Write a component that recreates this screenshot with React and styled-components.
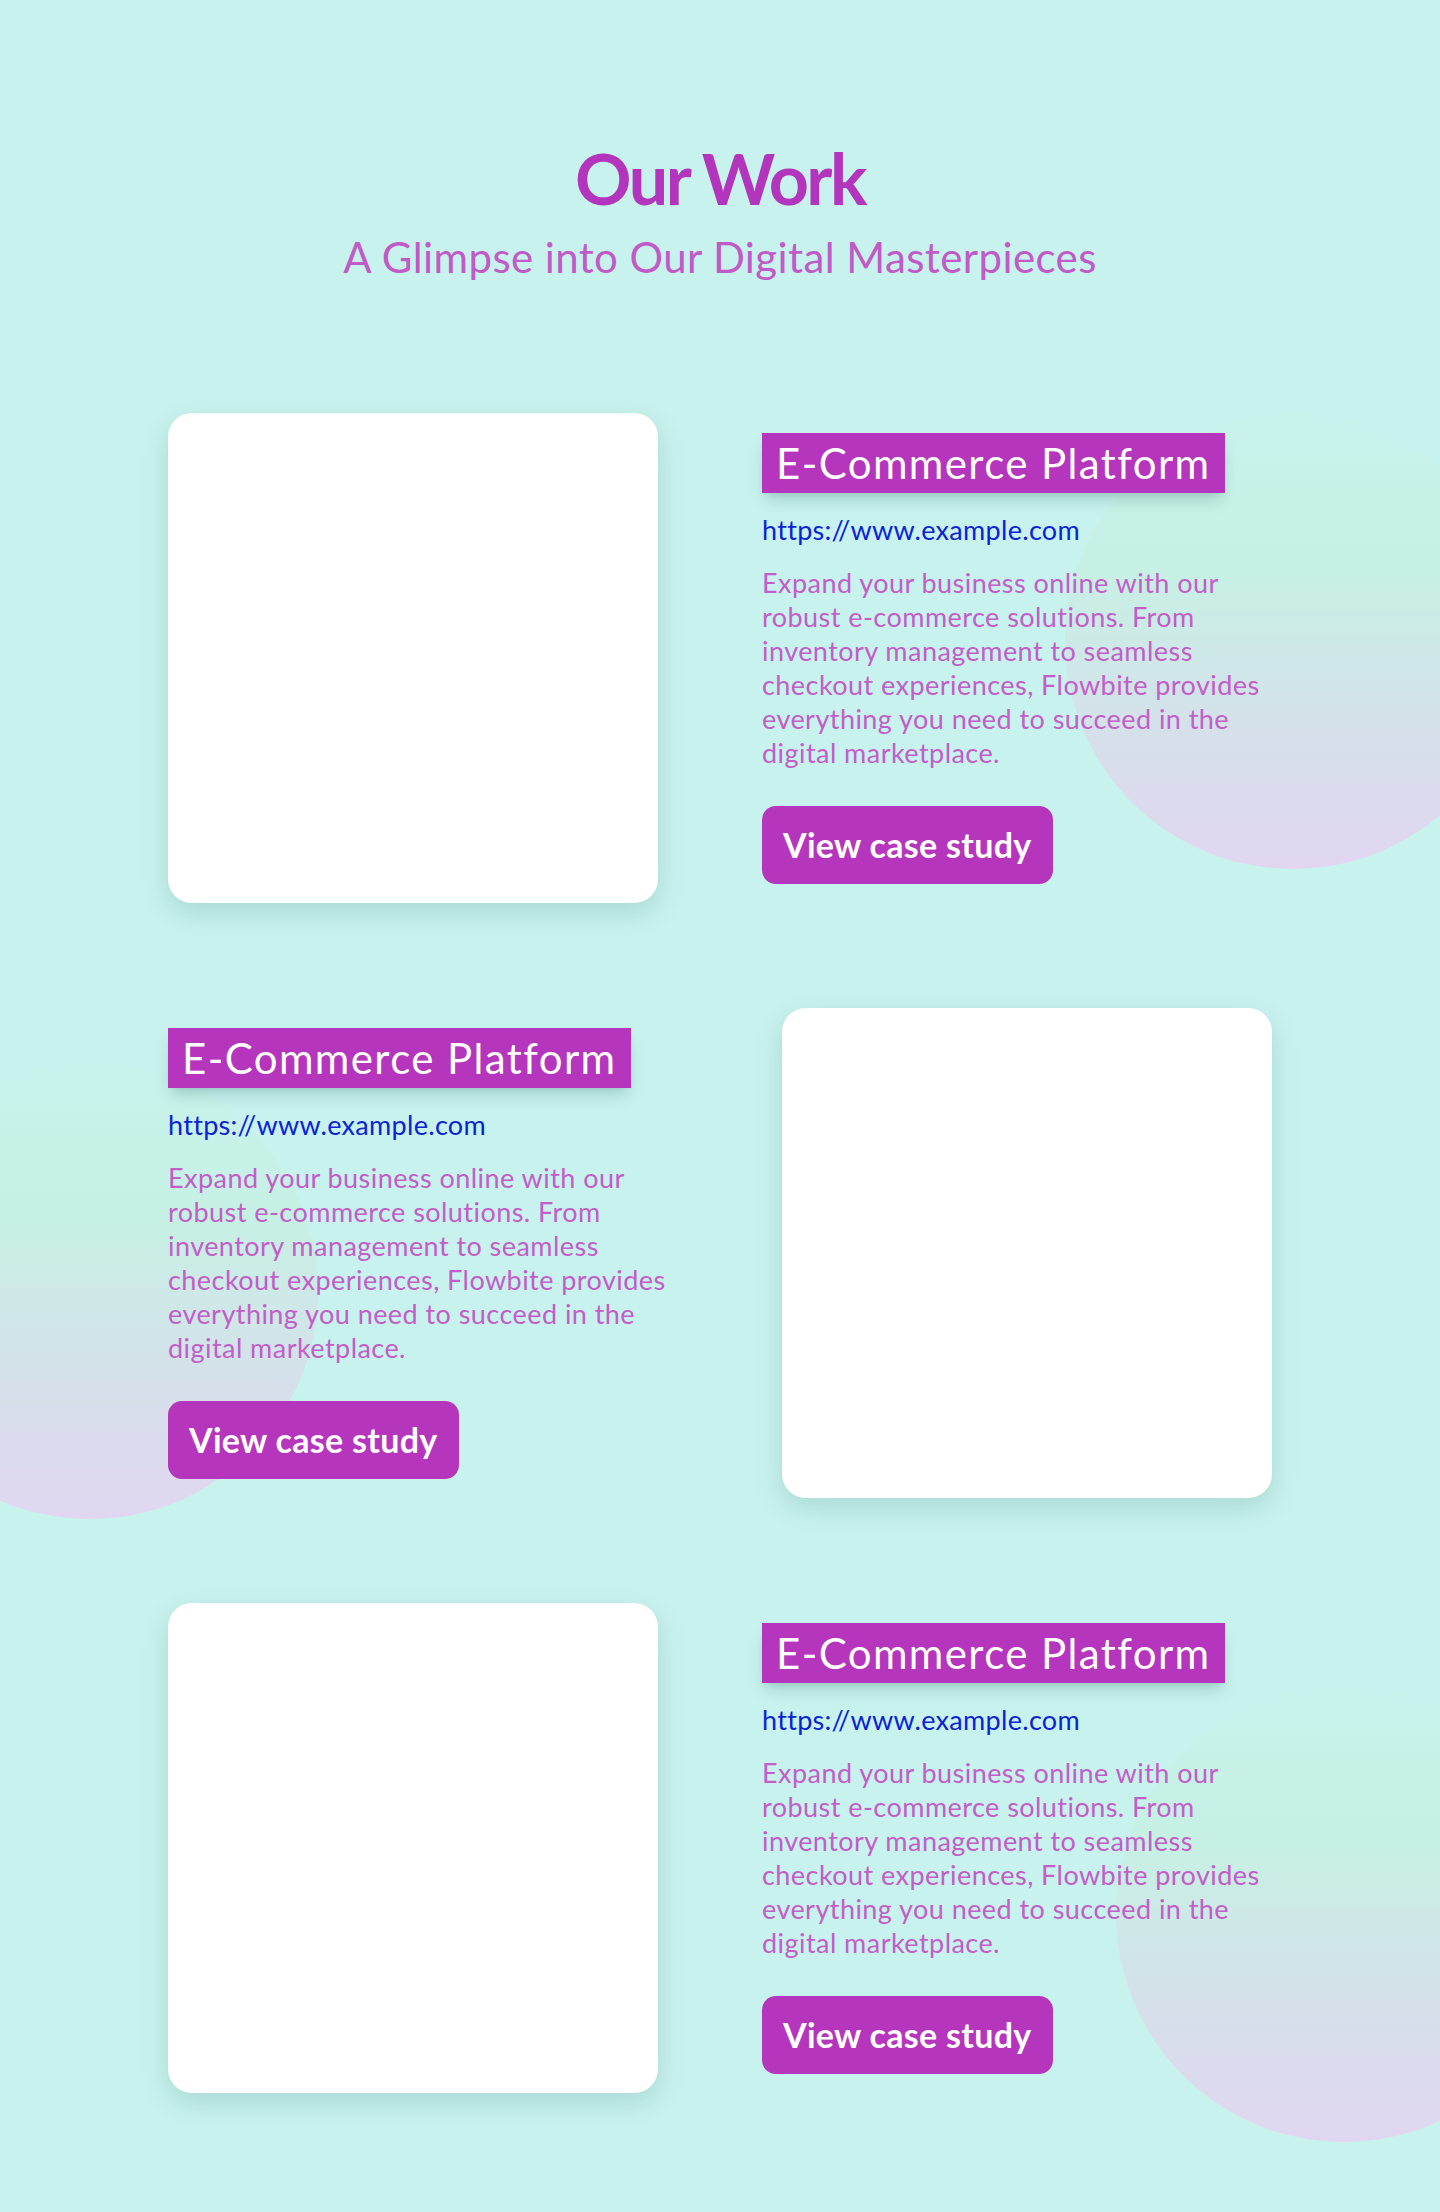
import React from 'react'
import styled, { createGlobalStyle } from 'styled-components'

const GlobalStyle = createGlobalStyle`
  html, body {
    margin: 0;
    padding: 0;
    background: #c8f2ed;
    overflow-x: hidden;
  }
  * {
    box-sizing: border-box;
  }
`

const Page = styled.main`
  position: relative;
  overflow: hidden;
  min-height: 2212px;
  padding: 142px 0 118px;
  background: #c8f2ed;
  font-family: Lato, "Noto Sans", sans-serif;
`

const Blob = styled.div`
  position: absolute;
  top: ${(p) => p.$top}px;
  left: ${(p) => p.$left}px;
  width: 456px;
  height: 456px;
  border-radius: 50%;
  background: linear-gradient(180deg, #c8f2ec 0%, #c7f0e4 35%, #d5e0ea 70%, #e1d6f0 100%);
  z-index: 0;
`

const Header = styled.header`
  position: relative;
  z-index: 1;
  display: flex;
  flex-direction: column;
  align-items: center;
  gap: 22px;
  margin-bottom: 135px;
`

const Title = styled.h1`
  margin: 0;
  font-size: 70px;
  line-height: 72px;
  font-weight: 700;
  letter-spacing: -2.5px;
  color: #b334bd;
`

const Subtitle = styled.p`
  margin: 0;
  font-size: 42px;
  line-height: 42px;
  font-weight: 400;
  letter-spacing: 0.4px;
  color: #c05ac8;
`

const List = styled.div`
  position: relative;
  z-index: 1;
  width: 1104px;
  margin: 0 auto;
  display: flex;
  flex-direction: column;
  gap: 105px;
`

const Row = styled.section`
  display: flex;
  flex-direction: ${(p) => (p.$reverse ? 'row-reverse' : 'row')};
  justify-content: space-between;
  align-items: center;
`

const Shot = styled.div`
  width: 490px;
  height: 490px;
  flex-shrink: 0;
  background: #ffffff;
  border-radius: 24px;
  box-shadow: 0 10px 28px rgba(20, 90, 90, 0.16);
`

const Info = styled.div`
  width: 510px;
  display: flex;
  flex-direction: column;
  align-items: flex-start;
`

const Tag = styled.h2`
  margin: 0;
  padding: 6px 14px;
  font-size: 42px;
  line-height: 48px;
  font-weight: 400;
  letter-spacing: 1.4px;
  color: #ffffff;
  background: #b535bd;
  box-shadow: 0 10px 15px -3px rgba(0, 60, 60, 0.18), 0 4px 6px -4px rgba(0, 60, 60, 0.12);
`

const Link = styled.a`
  margin-top: 17px;
  font-size: 27px;
  line-height: 39px;
  letter-spacing: 0.3px;
  color: #0b22d8;
  text-decoration: none;
`

const Text = styled.p`
  margin: 17px 0 0;
  font-size: 27px;
  line-height: 34px;
  letter-spacing: 0.45px;
  color: #c25dca;
`

const Button = styled.a`
  margin-top: 36px;
  padding: 18px 21px;
  font-size: 34px;
  line-height: 42px;
  font-weight: 700;
  letter-spacing: 0.3px;
  color: #ffffff;
  background: #b535bd;
  border-radius: 14px;
  text-decoration: none;
`

const projects = [
  { id: 1, reverse: false },
  { id: 2, reverse: true },
  { id: 3, reverse: false },
]

const blobs = [
  { top: 413, left: 1065 },
  { top: 1063, left: -138 },
  { top: 1686, left: 1116 },
]

const ProjectRow = ({ reverse }) => (
  <Row $reverse={reverse}>
    <Shot />
    <Info>
      <Tag>E-Commerce Platform</Tag>
      <Link href="#">https://www.example.com</Link>
      <Text>
        Expand your business online with our robust e-commerce solutions. From
        inventory management to seamless checkout experiences, Flowbite provides
        everything you need to succeed in the digital marketplace.
      </Text>
      <Button href="#">View case study</Button>
    </Info>
  </Row>
)

const App = () => (
  <>
    <GlobalStyle />
    <Page>
      {blobs.map((b) => (
        <Blob key={b.top} $top={b.top} $left={b.left} />
      ))}
      <Header>
        <Title>Our Work</Title>
        <Subtitle>A Glimpse into Our Digital Masterpieces</Subtitle>
      </Header>
      <List>
        {projects.map((p) => (
          <ProjectRow key={p.id} reverse={p.reverse} />
        ))}
      </List>
    </Page>
  </>
)

export default App
